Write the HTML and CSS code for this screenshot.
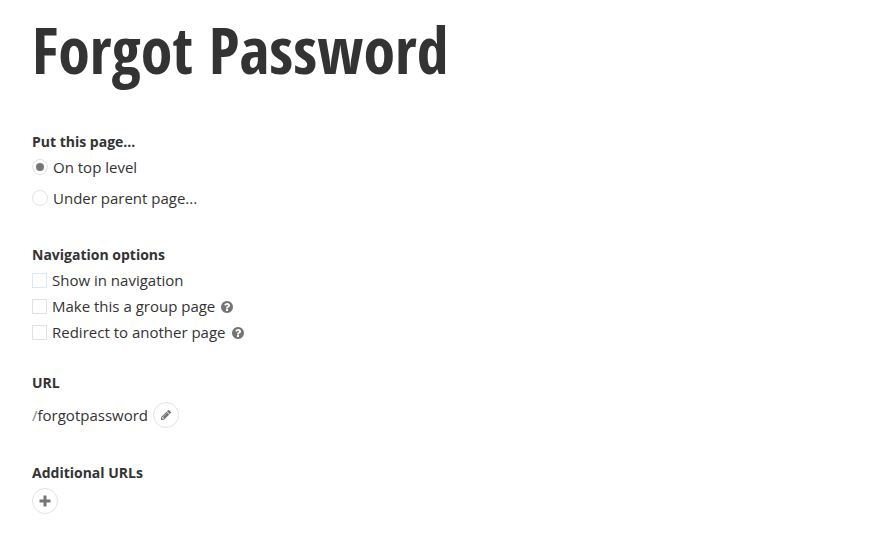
FILE: index.html
```
<!DOCTYPE html>
<html lang="en">
<head>
<meta charset="utf-8">
<title>Forgot Password</title>
<link rel="stylesheet" href="styles.css">
</head>
<body>
<main class="page">
  <h1 class="title">Forgot Password</h1>
  <section class="group placement">
    <h2 class="label">Put this page...</h2>
    <div class="row radio-row"><span class="radio checked"></span><span>On top level</span></div>
    <div class="row radio-row"><span class="radio"></span><span>Under parent page...</span></div>
  </section>
  <section class="group navigation">
    <h2 class="label">Navigation options</h2>
    <div class="row"><span class="box active"></span><span>Show in navigation</span></div>
    <div class="row"><span class="box"></span><span>Make this a group page</span><svg class="help" viewBox="0 0 1536 1536"><path d="M896 1248v-192q0-14-9-23t-23-9H672q-14 0-23 9t-9 23v192q0 14 9 23t23 9h192q14 0 23-9t9-23zm256-672q0-88-55.500-163T958 297t-170-41q-243 0-371 213-15 24 8 42l132 100q7 6 19 6 16 0 25-12 53-68 86-92 34-24 86-24 48 0 85.500 26t37.500 59q0 38-20 61t-68 45q-63 28-115.500 86.500T640 892v36q0 14 9 23t23 9h192q14 0 23-9t9-23q0-19 21.500-49.500T972 829q32-18 49-28.500t46-35 44.500-48 28-60.500 12.500-81zm384 192q0 209-103 385.500T1153.500 1433 768 1536t-385.500-103T103 1153.500 0 768t103-385.500T382.500 103 768 0t385.500 103T1433 382.500 1536 768z"/></svg></div>
    <div class="row"><span class="box"></span><span>Redirect to another page</span><svg class="help" viewBox="0 0 1536 1536"><path d="M896 1248v-192q0-14-9-23t-23-9H672q-14 0-23 9t-9 23v192q0 14 9 23t23 9h192q14 0 23-9t9-23zm256-672q0-88-55.500-163T958 297t-170-41q-243 0-371 213-15 24 8 42l132 100q7 6 19 6 16 0 25-12 53-68 86-92 34-24 86-24 48 0 85.500 26t37.500 59q0 38-20 61t-68 45q-63 28-115.500 86.500T640 892v36q0 14 9 23t23 9h192q14 0 23-9t9-23q0-19 21.500-49.500T972 829q32-18 49-28.500t46-35 44.500-48 28-60.500 12.500-81zm384 192q0 209-103 385.500T1153.500 1433 768 1536t-385.500-103T103 1153.500 0 768t103-385.500T382.500 103 768 0t385.500 103T1433 382.500 1536 768z"/></svg></div>
  </section>
  <section class="group url">
    <h2 class="label">URL</h2>
    <div class="row url-row"><span class="path"><span class="slash">/</span>forgotpassword</span><span class="round"><svg class="pencil" viewBox="0 0 1515 1515"><path d="M363 1515l91-91-235-235-91 91v107h128v128h107zm523-928q0-22-22-22-10 0-17 7l-542 542q-7 7-7 17 0 22 22 22 10 0 17-7l542-542q7-7 7-17zm-54-192l416 416-832 832H0v-416zm683 96q0 53-37 90l-166 166-416-416 166-165q36-38 90-38 53 0 91 38l235 234q37 39 37 91z" transform="translate(0 -128)"/></svg></span></div>
  </section>
  <section class="group extra">
    <h2 class="label">Additional URLs</h2>
    <span class="round"><svg class="plus" viewBox="0 0 12 12"><path d="M4.500 0.500h3v4h4v3h-4v4h-3v-4h-4v-3h4z"/></svg></span>
  </section>
</main>
</body>
</html>
```
FILE: styles.css
```
* { box-sizing: border-box; }
body {
  margin: 0;
  background: #fff;
  color: #333;
  font: 400 15px/26px "Open Sans", sans-serif;
}
.page { display: flex; flex-direction: column; align-items: flex-start; padding: 6px 32px 0; }
.title {
  margin: 0;
  font: 700 64px/88px "Open Sans Condensed", "Open Sans", sans-serif;
  font-stretch: 75%;
  white-space: nowrap;
}
.group { display: flex; flex-direction: column; align-items: flex-start; }
.label { margin: 0; font-size: 14px; line-height: 26px; font-weight: 700; }
.row { display: flex; align-items: center; height: 26px; white-space: nowrap; }
.placement { margin-top: 35px; }
.placement .label, .navigation .label { margin-bottom: -1px; }
.radio-row + .radio-row { margin-top: 5px; }
.radio {
  display: flex;
  align-items: center;
  justify-content: center;
  width: 16px;
  height: 16px;
  margin-right: 5px;
  border: 1px solid #e3e3e3;
  border-radius: 50%;
}
.checked::after { content: ""; width: 8px; height: 8px; border-radius: 50%; background: #757575; }
.navigation { margin-top: 31px; }
.box { width: 15px; height: 15px; margin-right: 5px; border: 1px solid #e1e1e1; }
.box.active { border-color: #d9eaf3; }
.help { width: 12px; height: 12px; margin: 2px 0 0 6px; fill: #757575; }
.url { margin-top: 25px; }
.url-row { margin-top: 6px; }
.path { font-weight: 380; }
.slash { color: #888; }
.round {
  display: flex;
  align-items: center;
  justify-content: center;
  width: 26px;
  height: 26px;
  border: 1px solid #e3e3e3;
  border-radius: 50%;
}
.url-row .round { margin-left: 5px; }
.pencil { width: 10px; height: 10px; fill: #757575; }
.extra { margin-top: 32px; }
.extra .round { margin-top: 2px; }
.plus { width: 12px; height: 12px; fill: #757575; }
```
